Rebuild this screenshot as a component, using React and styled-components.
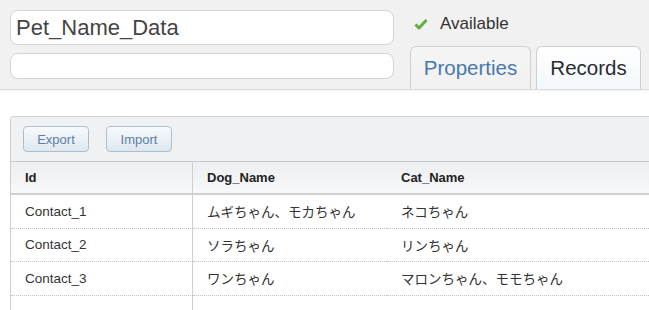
import React from 'react';
import styled, { createGlobalStyle } from 'styled-components';

const GlobalStyle = createGlobalStyle`
	html, body {
		margin: 0;
		padding: 0;
		background: #ffffff;
		overflow: hidden;
	}
	body {
		font-family: "Liberation Sans", Arial, "Noto Sans CJK JP", sans-serif;
		color: #333;
	}
`;

const TopBar = styled.div`
	height: 90px;
	box-sizing: border-box;
	background-color: #f1f1f1;
	border-bottom: 1px solid #dcdcdc;
	box-shadow: 0 1px 2px rgba(0, 0, 0, 0.06);
	display: flex;
	padding-left: 10px;
`;

const NameColumn = styled.div`
	width: 384px;
	padding-top: 10px;
	display: flex;
	flex-direction: column;
	gap: 8px;
`;

const TextBox = styled.div`
	box-sizing: border-box;
	height: ${(props) => (props.$big ? '35px' : '26px')};
	background: #fff;
	border: 1px solid #d4d4d4;
	border-radius: 8px;
	font-size: 22px;
	line-height: 33px;
	padding-left: 5px;
	color: #444;
`;

const SideColumn = styled.div`
	margin-left: 16px;
	display: flex;
	flex-direction: column;
	justify-content: space-between;
`;

const Status = styled.div`
	display: flex;
	align-items: center;
	gap: 12px;
	margin-top: 14px;
	margin-left: 4px;
	font-size: 17px;
	color: #333;
`;

const Tabs = styled.div`
	display: flex;
	gap: 5px;
`;

const Tab = styled.div`
	box-sizing: border-box;
	height: 43px;
	width: ${(props) => props.$width}px;
	border: 1px solid #cfcfcf;
	border-bottom: none;
	border-radius: 6px 6px 0 0;
	font-size: 20.5px;
	display: flex;
	align-items: center;
	justify-content: center;
	color: ${(props) => (props.$active ? '#2b2b33' : '#4a78ad')};
	background: ${(props) =>
		props.$active ? 'linear-gradient(#ffffff, #f4f8fc)' : 'linear-gradient(#f5f5f5, #f1f1f1)'};
`;

const Panel = styled.div`
	margin: 26px 0 0 10px;
	width: 700px;
	border: 1px solid #cfcfcf;
	border-right: none;
	border-radius: 4px 0 0 0;
	background: #fff;
`;

const PanelHeader = styled.div`
	height: 45px;
	box-sizing: border-box;
	padding: 9px 0 0 12px;
	display: flex;
	gap: 17px;
	background: #f0f1f3;
	border-bottom: 1px solid #c9c9c9;
	border-radius: 4px 0 0 0;
`;

const Button = styled.button`
	box-sizing: border-box;
	height: 26px;
	width: ${(props) => props.$width}px;
	font-family: inherit;
	font-size: 13px;
	color: #5b7fa6;
	background: linear-gradient(#f7fafc, #dee7ef);
	border: 1px solid #aebfcf;
	border-radius: 4px;
	padding: 0;
`;

const Table = styled.div`
	display: grid;
	grid-template-columns: 182px 194px 1fr;
`;

const HeadCell = styled.div`
	height: 33px;
	box-sizing: border-box;
	padding-left: 14px;
	display: flex;
	align-items: center;
	font-size: 13px;
	font-weight: bold;
	color: #222;
	background: linear-gradient(#eceef0, #f7f8f9);
	border-bottom: 2px solid #cfcfcf;
	border-right: ${(props) => (props.$divider ? '1px solid #cfcfcf' : 'none')};
`;

const Cell = styled.div`
	height: 33.5px;
	box-sizing: border-box;
	padding-left: 14px;
	display: flex;
	align-items: center;
	font-size: 13.5px;
	color: #333;
	border-bottom: 1px dotted #c4c4c4;
	border-right: ${(props) => (props.$divider ? '1px solid #cfcfcf' : 'none')};
`;

const rows = [
	['Contact_1', 'ムギちゃん、モカちゃん', 'ネコちゃん'],
	['Contact_2', 'ソラちゃん', 'リンちゃん'],
	['Contact_3', 'ワンちゃん', 'マロンちゃん、モモちゃん'],
	['', '', ''],
];

const Check = () => (
	<svg width="14" height="12" viewBox="0 0 14 12">
		<path d="M1.5 6.5 L5 10 L12.5 2" fill="none" stroke="#62ad45" strokeWidth="3" strokeLinejoin="round" />
	</svg>
);

const App = () => {
	return (
		<>
			<GlobalStyle />
			<TopBar>
				<NameColumn>
					<TextBox $big>Pet_Name_Data</TextBox>
					<TextBox />
				</NameColumn>
				<SideColumn>
					<Status>
						<Check />
						Available
					</Status>
					<Tabs>
						<Tab $width={121}>Properties</Tab>
						<Tab $width={105} $active>
							Records
						</Tab>
					</Tabs>
				</SideColumn>
			</TopBar>
			<Panel>
				<PanelHeader>
					<Button $width={66}>Export</Button>
					<Button $width={66}>Import</Button>
				</PanelHeader>
				<Table>
					<HeadCell $divider>Id</HeadCell>
					<HeadCell>Dog_Name</HeadCell>
					<HeadCell>Cat_Name</HeadCell>
					{rows.map((row, i) =>
						row.map((value, j) => (
							<Cell key={`${i}-${j}`} $divider={j === 0}>
								{value}
							</Cell>
						))
					)}
				</Table>
			</Panel>
		</>
	);
};

export default App;
